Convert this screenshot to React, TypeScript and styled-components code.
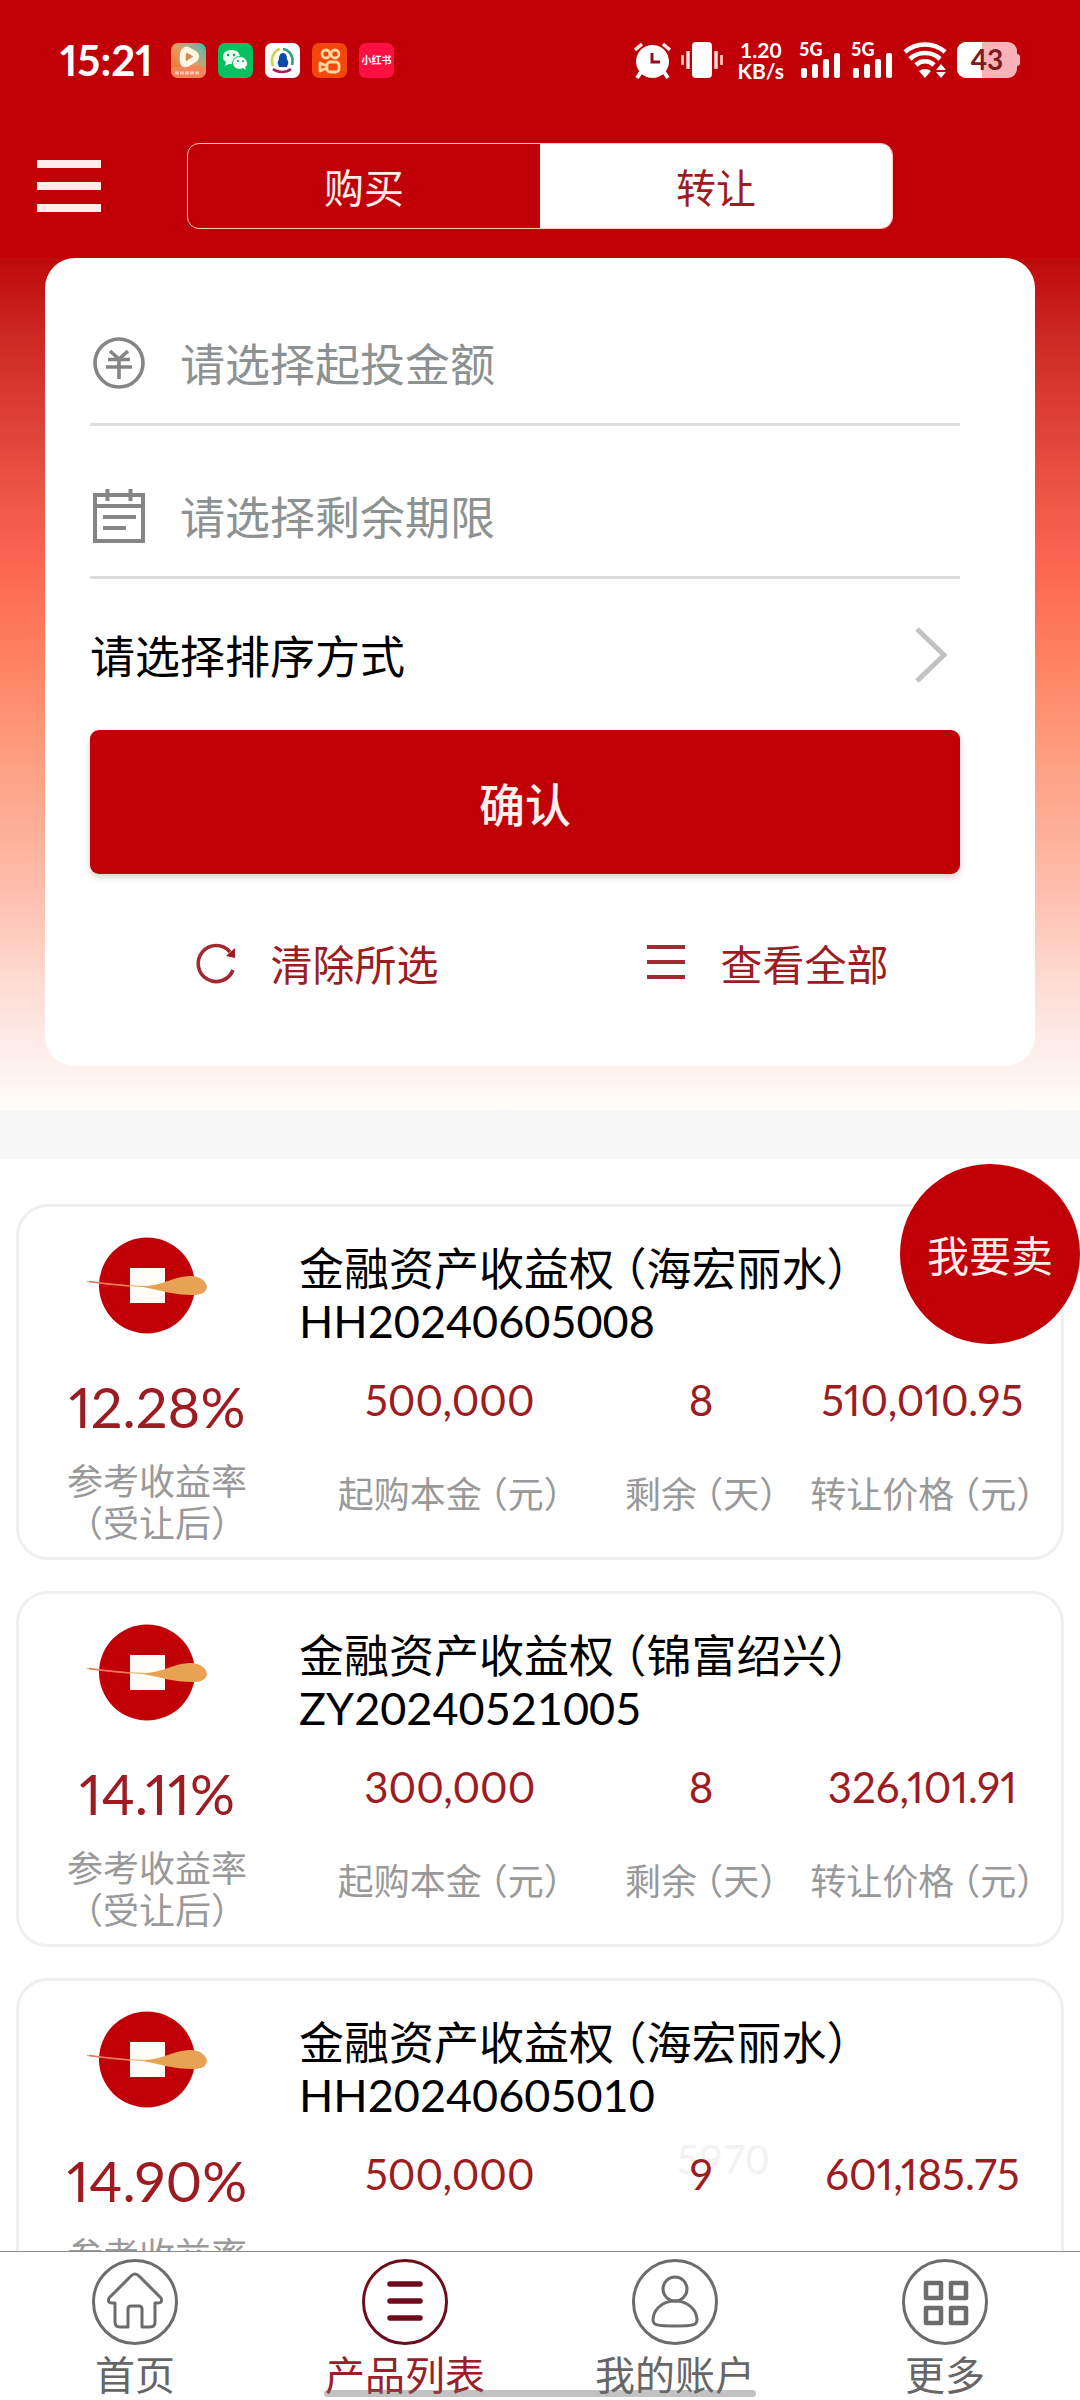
import React, { useState } from "react";
import styled, { createGlobalStyle } from "styled-components";

const red = "#c00006";
const ink = "#9c1c22";
const cjk = `"Noto Sans CJK SC", sans-serif`;
const latin = `Lato, "Noto Sans CJK SC", sans-serif`;

const GlobalStyle = createGlobalStyle`
  * { box-sizing: border-box; }
  body { margin: 0; background: #fff; font-family: ${cjk}; }
  button { border: 0; padding: 0; background: none; font: inherit; color: inherit; cursor: pointer; }
  p, h2, dl, dd, ul { margin: 0; padding: 0; }
  svg { display: block; flex: none; overflow: visible; }
`;

const Screen = styled.div`
  display: flex;
  flex-direction: column;
  height: 100vh;
  overflow: hidden;
  background: #fff;
`;

const Header = styled.header`
  flex: none;
  background: ${red};
`;

const StatusBar = styled.div`
  display: flex;
  align-items: center;
  justify-content: space-between;
  height: 120px;
  padding: 0 60px;
  color: #fff;
`;

const StatusGroup = styled.div<{ $gap: number }>`
  display: flex;
  align-items: center;
  gap: ${(p) => p.$gap}px;
`;

const Clock = styled.time`
  margin-right: 6px;
  font: 700 42px/48px ${latin};
  font-variant-numeric: proportional-nums;
`;

const NetSpeed = styled.div`
  margin: 0 5px;
  font: 700 21px/21px ${latin};
  text-align: center;
`;

const Toolbar = styled.div`
  display: flex;
  align-items: center;
  gap: 86px;
  padding: 23px 187px 29px 37px;
`;

const MenuButton = styled.button`
  display: flex;
  flex-direction: column;
  gap: 14px;
  width: 64px;
  flex: none;
`;

const MenuBar = styled.span`
  height: 8px;
  background: #ffeceb;
`;

const Segments = styled.div`
  display: flex;
  flex: 1;
  height: 86px;
  border: 1px solid #ffc9bd;
  border-radius: 12px;
  overflow: hidden;
`;

const Segment = styled.button<{ $active: boolean }>`
  flex: 1;
  font-size: 40px;
  line-height: 60px;
  background: ${(p) => (p.$active ? "#fff" : "transparent")};
  color: ${(p) => (p.$active ? ink : "#ffeeea")};
`;

const Main = styled.main`
  flex: 1;
  min-height: 0;
  overflow-y: auto;
  scrollbar-width: none;
`;

const FilterArea = styled.section`
  padding: 0 45px 44px;
  background: linear-gradient(
    #bd0a0b 0%,
    #cd2823 9%,
    #df463a 21%,
    #fb6450 35%,
    #ff7a5d 44%,
    #ff9675 55%,
    #fdab92 65%,
    #ffc0b0 75%,
    #fddcd2 85%,
    #feefed 94%,
    #fffefa 100%
  );
`;

const FilterCard = styled.form`
  padding: 15px 45px 14px;
  border-radius: 30px;
  background: #fff;
`;

const FilterFields = styled.div`
  padding-right: 30px;
`;

const Field = styled.label`
  display: flex;
  align-items: center;
  gap: 35px;
  height: 153px;
  padding: 30px 3px 0;
  border-bottom: 3px solid #dcdcdc;
`;

const FieldInput = styled.input`
  flex: 1;
  min-width: 0;
  padding: 0;
  border: 0;
  outline: 0;
  background: none;
  font: 45px/66px ${cjk};
  color: #333;

  &::placeholder {
    color: #8c9291;
    opacity: 1;
  }
`;

const SortButton = styled.button`
  display: flex;
  align-items: center;
  justify-content: space-between;
  width: 100%;
  height: 151px;
  padding: 0 12px 0 0;
  font-size: 45px;
  line-height: 66px;
  color: #000;
`;

const ConfirmButton = styled.button`
  width: 100%;
  height: 144px;
  border-radius: 9px;
  background: ${red};
  box-shadow: 0 3px 6px rgba(120, 60, 40, 0.25);
  font-size: 46px;
  font-weight: 500;
  color: #fff0ee;
`;

const FilterLinks = styled.div`
  display: grid;
  grid-template-columns: 1fr 1fr;
  height: 178px;
`;

const LinkButton = styled.button`
  display: flex;
  align-items: center;
  justify-content: center;
  gap: 34px;
  padding-left: 5px;
  font-size: 42px;
  line-height: 60px;
  color: ${ink};
`;

const Divider = styled.div`
  height: 49px;
  background: #f6f6f6;
`;

const ListArea = styled.section`
  position: relative;
`;

const SellButton = styled.button`
  position: absolute;
  top: 5px;
  right: 0;
  width: 180px;
  height: 180px;
  border-radius: 50%;
  background: ${red};
  font-size: 42px;
  line-height: 60px;
  color: #ffeeea;
`;

const Products = styled.ul`
  display: flex;
  flex-direction: column;
  gap: 31px;
  padding: 45px 16px 31px;
  list-style: none;
`;

const Product = styled.li`
  position: relative;
  isolation: isolate;
  display: flex;
  height: 356px;
  border: 3px solid #f0f0f0;
  border-radius: 32px;
  font-feature-settings: "halt";
`;

const Yield = styled.div`
  display: flex;
  flex-direction: column;
  align-items: center;
  width: 276px;
  flex: none;
  padding-top: 30px;
`;

const Rate = styled.p`
  margin-top: 43px;
  font: 56px/60px ${latin};
  font-variant-numeric: proportional-nums;
  color: ${ink};
`;

const Caption = styled.p`
  margin-top: 21px;
  font-size: 36px;
  line-height: 42px;
  text-align: center;
  color: #999;
`;

const Details = styled.div`
  flex: 1;
  padding: 33px 18px 0 4px;
`;

const Title = styled.h2`
  font-weight: 400;
  font-size: 45px;
  line-height: 54px;
  color: #000;
`;

const Code = styled.p`
  font-family: ${latin};
  font-size: 45px;
  line-height: 54px;
  color: #000;
`;

const Metrics = styled.dl`
  display: grid;
  grid-template-columns: 15fr 10fr 12fr;
  margin-top: 28px;
`;

const Metric = styled.div`
  display: flex;
  flex-direction: column-reverse;
  align-items: center;
  gap: 47px;
  white-space: nowrap;
`;

const MetricLabel = styled.dt`
  font-size: 36px;
  line-height: 42px;
  color: #999;
`;

const MetricValue = styled.dd`
  font: 42px/48px ${latin};
  font-variant-numeric: proportional-nums;
  color: ${ink};
`;

const Ghost = styled.span`
  position: absolute;
  z-index: -1;
  top: 154px;
  right: 292px;
  font: 40px/48px ${latin};
  color: #f3f3f3;
`;

const TabBar = styled.nav`
  position: relative;
  display: grid;
  grid-template-columns: repeat(4, 1fr);
  flex: none;
  padding: 7px 0 3px;
  border-top: 1px solid #8a8a8a;
  background: #fff;
`;

const Tab = styled.a<{ $active?: boolean }>`
  display: flex;
  flex-direction: column;
  align-items: center;
  gap: 4px;
  font-size: 40px;
  line-height: 48px;
  text-decoration: none;
  color: ${(p) => (p.$active ? "#98202a" : "#666")};
`;

const HomeIndicator = styled.div`
  position: absolute;
  bottom: 3px;
  left: 30%;
  right: 30%;
  height: 7px;
  border-radius: 4px;
  background: rgba(110, 110, 110, 0.42);
`;

const VideoAppIcon = () => (
  <svg width="35" height="35" viewBox="0 0 35 35">
    <defs>
      <linearGradient id="video" x1="0" y1="1" x2="1" y2="0">
        <stop offset="0" stopColor="#f0622f" />
        <stop offset="0.5" stopColor="#e89a5c" />
        <stop offset="0.8" stopColor="#7fb59a" />
        <stop offset="1" stopColor="#3fb6a8" />
      </linearGradient>
    </defs>
    <rect width="35" height="35" rx="7" fill="url(#video)" />
    <path d="M0 25q17-4 35-1v4a7 7 0 0 1-7 7H7a7 7 0 0 1-7-7z" fill="#f4845a" />
    <path d="M13 8q2-2 4-1l7 4q2 2 0 5l-8 5q-3 1-4-2-1-7 1-11z" fill="#d98a4c" stroke="#fff6e8" strokeWidth="6" strokeLinejoin="round" />
    <path d="M4 30h24" stroke="#ffc4ac" strokeWidth="3" strokeDasharray="4 1" />
  </svg>
);

const WeChatIcon = () => (
  <svg width="35" height="35" viewBox="0 0 35 35">
    <rect width="35" height="35" rx="7" fill="#07c160" />
    <path d="M13 7c-5 0-8 3-8 7 0 2 1 4 3 5l-1 4 4-2h3c0-5 4-8 8-8-1-4-4-6-9-6z" fill="#e9fff0" />
    <path d="M22 14c-4 0-7 3-7 6s3 6 7 6l3-1 3 2-1-3c2-1 2-2 2-4 0-3-3-6-7-6z" fill="#fff" />
    <g fill="#07a050">
      <circle cx="10" cy="12" r="1.2" />
      <circle cx="16" cy="12" r="1.2" />
      <circle cx="20" cy="18" r="1" />
      <circle cx="25" cy="18" r="1" />
    </g>
  </svg>
);

const MailAppIcon = () => (
  <svg width="35" height="35" viewBox="0 0 35 35" fill="none">
    <rect width="35" height="35" rx="7" fill="#fff" />
    <path d="M8 23C5 15 9 8 15 6" stroke="#d6cf45" strokeWidth="2.6" />
    <path d="M18 6c7 1 11 8 9 16" stroke="#2b9a80" strokeWidth="2.6" />
    <path d="M8 26c5 4 13 4 18 0" stroke="#a51d5a" strokeWidth="2.6" />
    <path d="M18 10c-3 0-4 3-4 6-1 2-2 4-1 5l1 3h8l1-3c1-1 0-3-1-5 0-3-1-6-4-6z" fill="#0b4aa6" />
  </svg>
);

const KuaishouIcon = () => (
  <svg width="35" height="35" viewBox="0 0 35 35" fill="none" stroke="#ffd9a0" strokeWidth="2.8">
    <rect width="35" height="35" rx="7" fill="#f4470b" stroke="none" />
    <circle cx="14" cy="11" r="4" />
    <circle cx="23" cy="11" r="4" />
    <rect x="15" y="19" width="12" height="10" rx="3" />
    <path d="M15 23l-7-3v8l7-3" strokeLinejoin="round" />
  </svg>
);

const RedBookIcon = () => (
  <svg width="35" height="35" viewBox="0 0 35 35">
    <rect width="35" height="35" rx="7" fill="#ff0f42" />
    <text x="17.5" y="21" textAnchor="middle" fontFamily="Noto Sans CJK SC" fontWeight="700" fontSize="10" fill="#fff">
      小红书
    </text>
  </svg>
);

const AlarmIcon = () => (
  <svg width="37" height="36" viewBox="0 0 37 36">
    <circle cx="18.5" cy="19.5" r="16.5" fill="#fff" />
    <path d="M1 8l7-6M29 2l7 6" stroke="#ffe6e2" strokeWidth="3.6" />
    <path d="M7 30l-4 6M30 30l4 6" stroke="#fff" strokeWidth="4" />
    <path d="M18 11v9h8" fill="none" stroke="#93101a" strokeWidth="3" />
  </svg>
);

const VibrateIcon = () => (
  <svg width="42" height="36" viewBox="0 0 42 36">
    <rect x="11" width="20" height="36" rx="4" fill="#fff" />
    <path d="M7 9v18M35 9v18" stroke="#ffe6e2" strokeWidth="3.4" />
    <path d="M1.5 13v10M40.5 13v10" stroke="#ffd0ca" strokeWidth="2.6" />
  </svg>
);

const SignalIcon = () => (
  <svg width="42" height="36" viewBox="0 0 42 36" fill="#fff">
    <text x="0" y="14" fontFamily="Lato" fontWeight="900" fontSize="18">
      5G
    </text>
    <rect x="2" y="26" width="6" height="10" rx="2" />
    <rect x="13" y="22" width="6" height="14" rx="2" />
    <rect x="24" y="17" width="6" height="19" rx="2" />
    <rect x="35" y="11" width="6" height="25" rx="2" />
  </svg>
);

const WifiIcon = () => (
  <svg width="44" height="36" viewBox="0 0 44 36" fill="none" stroke="#fff" strokeWidth="4.6">
    <path d="M2 10C13 0 31 0 42 10" />
    <path d="M7 17C15 9 29 9 37 17" />
    <path d="M13 23c5-5 13-5 18 0" />
    <path d="M16 29q6-4 12 0l-6 7z" fill="#fff" stroke="none" />
    <path d="M33 28l5-6 5 6zM33 30h10l-5 6z" fill="#fff" stroke="none" />
  </svg>
);

const BatteryIcon = () => (
  <svg width="63" height="36" viewBox="0 0 63 36">
    <rect width="60" height="36" rx="9" fill="#f9b3b8" />
    <path d="M60 12q3 0 3 3v6q0 3-3 3z" fill="#f9b3b8" />
    <path d="M9 0h16v36H9a9 9 0 0 1-9-9V9a9 9 0 0 1 9-9z" fill="#fff" />
    <text x="30" y="28" textAnchor="middle" fontFamily="Lato" fontWeight="700" fontSize="28" fill="#7c1a20">
      43
    </text>
  </svg>
);

const YuanIcon = () => (
  <svg width="52" height="52" viewBox="0 0 52 52" fill="none" stroke="#858585" strokeWidth="3.6">
    <circle cx="26" cy="26" r="24" />
    <path d="M17 14l9 8 9-8M15 22.5h22M13 30h26M26 22v20" />
  </svg>
);

const CalendarIcon = () => (
  <svg width="52" height="54" viewBox="0 0 52 54" fill="none" stroke="#858585" strokeWidth="4">
    <path d="M2 6h48v46H2zM2 17h48M10 28h33M10 39h23" />
    <path d="M14.5 0v12M37.5 0v12" />
  </svg>
);

const ChevronIcon = () => (
  <svg width="34" height="58" viewBox="0 0 34 58" fill="none" stroke="#c2c2c2" strokeWidth="5">
    <path d="M3 3l27 26L3 55" />
  </svg>
);

const ResetIcon = () => (
  <svg width="40" height="40" viewBox="0 0 40 40">
    <path d="M37 27A18 18 0 1 1 34 9" fill="none" stroke="#a02a30" strokeWidth="3.6" />
    <path d="M39 5v10l-9-2z" fill={ink} />
  </svg>
);

const LinesIcon = () => (
  <svg width="40" height="40" viewBox="0 0 40 40">
    <path d="M1 4h38M1 19h38M1 34h38" stroke="#a02a30" strokeWidth="4" />
  </svg>
);

const CoinLogo = () => (
  <svg width="140" height="97" viewBox="0 0 140 97">
    <circle cx="60" cy="48.5" r="48" fill={red} />
    <rect x="43" y="31" width="35" height="35" fill="#fffdf8" />
    <path d="M0 44q28 4 58 5c20-1 28-10 47-10 9 1 14 5 15 11-1 6-6 8-14 8-20 0-34-5-50-8Q26 48 0 45z" fill="#e8a254" />
    <path d="M2 44.5q22 3 41 4.5" fill="none" stroke="#e87a5c" strokeWidth="1.6" />
  </svg>
);

const TabIcon = ({ color, children }: { color: string; children: React.ReactNode }) => (
  <svg width="86" height="86" viewBox="0 0 86 86" fill="none" stroke={color} strokeWidth="3">
    <circle cx="43" cy="43" r="41.5" />
    {children}
  </svg>
);

const HomeIcon = () => (
  <TabIcon color="#6c6c6c">
    <path d="M39 17q4-4 8 0l22 22q2 5-3 5h-3v19q0 5-5 5h-8V50q0-3-3-3h-8q-3 0-3 3v18h-8q-5 0-5-5V44h-3q-5 0-3-5z" strokeLinejoin="round" />
  </TabIcon>
);

const ListIcon = () => (
  <TabIcon color="#6e0c1c">
    <path d="M28 25h30M28 42h30M28 59h30" strokeWidth="5.5" strokeLinecap="round" />
  </TabIcon>
);

const UserIcon = () => (
  <TabIcon color="#6c6c6c">
    <circle cx="43" cy="30" r="12" />
    <path d="M43 42c13 0 22 9 22 19 0 5-4 6-22 6s-22-1-22-6c0-10 9-19 22-19z" />
  </TabIcon>
);

const MoreIcon = () => (
  <TabIcon color="#6c6c6c">
    <g strokeWidth="4.5" strokeLinejoin="round">
      <rect x="24" y="24" width="15" height="15" />
      <rect x="49" y="24" width="15" height="15" />
      <rect x="24" y="49" width="15" height="15" />
      <rect x="49" y="49" width="15" height="15" />
    </g>
  </TabIcon>
);

interface ProductData {
  name: string;
  code: string;
  rate: string;
  principal: string;
  days: string;
  price: string;
  ghost?: string;
}

const products: ProductData[] = [
  { name: "金融资产收益权 （海宏丽水）", code: "HH20240605008", rate: "12.28%", principal: "500,000", days: "8", price: "510,010.95" },
  { name: "金融资产收益权 （锦富绍兴）", code: "ZY20240521005", rate: "14.11%", principal: "300,000", days: "8", price: "326,101.91" },
  { name: "金融资产收益权 （海宏丽水）", code: "HH20240605010", rate: "14.90%", principal: "500,000", days: "9", price: "601,185.75", ghost: "5970" },
];

const ProductCard = ({ item }: { item: ProductData }) => (
  <Product>
    {item.ghost && <Ghost>{item.ghost}</Ghost>}
    <Yield>
      <CoinLogo />
      <Rate>{item.rate}</Rate>
      <Caption>
        参考收益率
        <br />
        （受让后）
      </Caption>
    </Yield>
    <Details>
      <Title>{item.name}</Title>
      <Code>{item.code}</Code>
      <Metrics>
        <Metric>
          <MetricLabel>起购本金 （元）</MetricLabel>
          <MetricValue>{item.principal}</MetricValue>
        </Metric>
        <Metric>
          <MetricLabel>剩余 （天）</MetricLabel>
          <MetricValue>{item.days}</MetricValue>
        </Metric>
        <Metric>
          <MetricLabel>转让价格 （元）</MetricLabel>
          <MetricValue>{item.price}</MetricValue>
        </Metric>
      </Metrics>
    </Details>
  </Product>
);

export default function App() {
  const [mode, setMode] = useState("转让");

  return (
    <Screen>
      <GlobalStyle />
      <Header>
        <StatusBar>
          <StatusGroup $gap={12}>
            <Clock>15:21</Clock>
            <VideoAppIcon />
            <WeChatIcon />
            <MailAppIcon />
            <KuaishouIcon />
            <RedBookIcon />
          </StatusGroup>
          <StatusGroup $gap={10}>
            <AlarmIcon />
            <VibrateIcon />
            <NetSpeed>
              1.20
              <br />
              KB/s
            </NetSpeed>
            <SignalIcon />
            <SignalIcon />
            <WifiIcon />
            <BatteryIcon />
          </StatusGroup>
        </StatusBar>
        <Toolbar>
          <MenuButton type="button" aria-label="菜单">
            <MenuBar />
            <MenuBar />
            <MenuBar />
          </MenuButton>
          <Segments>
            {["购买", "转让"].map((name) => (
              <Segment key={name} type="button" $active={mode === name} onClick={() => setMode(name)}>
                {name}
              </Segment>
            ))}
          </Segments>
        </Toolbar>
      </Header>

      <Main>
        <FilterArea>
          <FilterCard onSubmit={(e) => e.preventDefault()}>
            <FilterFields>
              <Field>
                <YuanIcon />
                <FieldInput readOnly placeholder="请选择起投金额" />
              </Field>
              <Field>
                <CalendarIcon />
                <FieldInput readOnly placeholder="请选择剩余期限" />
              </Field>
              <SortButton type="button">
                请选择排序方式
                <ChevronIcon />
              </SortButton>
              <ConfirmButton type="submit">确认</ConfirmButton>
            </FilterFields>
            <FilterLinks>
              <LinkButton type="reset">
                <ResetIcon />
                清除所选
              </LinkButton>
              <LinkButton type="button">
                <LinesIcon />
                查看全部
              </LinkButton>
            </FilterLinks>
          </FilterCard>
        </FilterArea>
        <Divider />
        <ListArea>
          <Products>
            {products.map((item) => (
              <ProductCard key={item.code} item={item} />
            ))}
          </Products>
          <SellButton type="button">我要卖</SellButton>
        </ListArea>
      </Main>

      <TabBar>
        <Tab href="#home">
          <HomeIcon />
          首页
        </Tab>
        <Tab href="#products" $active aria-current="page">
          <ListIcon />
          产品列表
        </Tab>
        <Tab href="#account">
          <UserIcon />
          我的账户
        </Tab>
        <Tab href="#more">
          <MoreIcon />
          更多
        </Tab>
        <HomeIndicator />
      </TabBar>
    </Screen>
  );
}
